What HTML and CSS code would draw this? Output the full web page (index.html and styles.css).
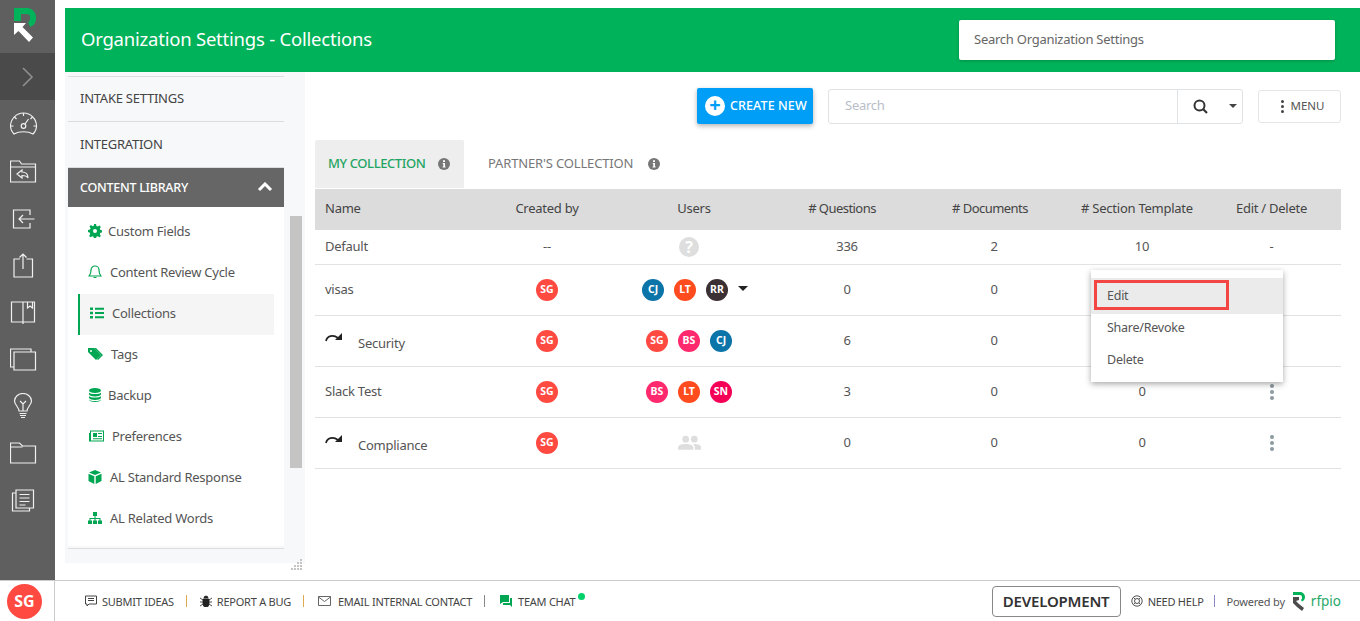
FILE: index.html
```html
<!DOCTYPE html>
<html lang="en">
<head>
    <meta charset="UTF-8">
    <title>Organization Settings - Collections</title>
    <link rel="stylesheet" href="styles.css">
</head>
<body>
    <div class="app">
        <nav class="rail">
            <div class="rail-logo">
                <svg width="30" height="36" viewBox="0 0 30 36">
                    <path d="M2 0H16a9 9 0 0 1 8 9v2a9 9 0 0 1-6 8l-2-5a3 3 0 0 0 2-3V9a3 3 0 0 0-3-3H9v7H2z" fill="#00b259"/>
                    <path d="M2 15H14L10.500 19 21 29.500 17 34 6.500 23 2 27z" fill="#fff"/>
                </svg>
            </div>
            <div class="rail-toggle">
                <svg width="14" height="22" viewBox="0 0 14 22"><path d="M2 2l9 9-9 9" fill="none" stroke="#8f8f8f" stroke-width="1.600"/></svg>
            </div>
            <div class="rail-icons">
                <svg class="rail-icon" viewBox="0 0 28 26"><path d="M4 23c-2-2-3.500-5-3.500-8a13 13 0 0 1 26 0c0 3-1.500 6-3.500 8-5-3-14-3-19 0z"/><circle cx="13.500" cy="15" r="2.300"/><path d="M15 13l3.500-5M13.500 2v3M4.500 6l2 2M.5 15h3M26.500 15h-3M22.500 6l-2 2"/></svg>
                <svg class="rail-icon" viewBox="0 0 28 26"><path d="M.5 9V3h9l2 3h14v18H.5V9h25"/><path d="M12 12l-5 4 5 4v-2.500c3 0 5 .5 6 2.500 0-4-2-6-6-6z"/></svg>
                <svg class="rail-icon" viewBox="0 0 28 26"><path d="M20 10V5H3.500v18H20v-5"/><path d="M24.500 14H9M13 10l-4 4 4 4"/></svg>
                <svg class="rail-icon" viewBox="0 0 28 26"><path d="M10 7H4v18h18.500V7H16.500M13 17V2M9.500 5.500L13 2l3.500 3.500"/></svg>
                <svg class="rail-icon" viewBox="0 0 28 26"><path d="M13 3H1.500v20H13zM13 3h11.500v20H13zM13 23v2M17.500 3v6l2.500-2 2.500 2V3"/></svg>
                <svg class="rail-icon" viewBox="0 0 28 26"><path d="M4 21H.5V3H21v3"/><path d="M4 6h21.500v18H4z"/></svg>
                <svg class="rail-icon" viewBox="0 0 28 26"><path d="M9 18c0-4-4.500-6-4.500-10a8.500 7.500 0 0 1 17 0c0 4-4.500 6-4.500 10zM9.500 20.500h7M10 22.500h6M11 24.500h4M13 18v-8M10 8l3 3 3-3"/></svg>
                <svg class="rail-icon" viewBox="0 0 28 26"><path d="M.5 23V3h9l3 3h13v17zM.5 7h12"/></svg>
                <svg class="rail-icon" viewBox="0 0 28 26"><path d="M6 3h17.500v18H6zM6 6H2.500v18h17v-3M9.500 7.500h10M9.500 11h10M9.500 14.500h10M9.500 18h6"/></svg>
            </div>
        </nav>
        <div class="page">
            <header class="page-header">
                <h1>Organization Settings - Collections</h1>
                <div class="org-search">Search Organization Settings</div>
            </header>
            <div class="page-body">
                <aside class="side">
                    <div class="side-list">
                        <div class="side-item">INTAKE SETTINGS</div>
                        <div class="side-item">INTEGRATION</div>
                        <div class="side-head"><span>CONTENT LIBRARY</span>
                            <svg width="16" height="10" viewBox="0 0 16 10"><path d="M2 8l6-6 6 6" fill="none" stroke="#fff" stroke-width="3"/></svg>
                        </div>
                        <div class="side-sub">
                            <div class="sub-item"><svg class="sub-icon" viewBox="0 0 14 14"><path d="M6 0h2l.4 2 1.400.6 1.700-1.100 1.400 1.400-1.100 1.700.6 1.400 2 .4v2l-2 .4-.6 1.400 1.100 1.700-1.400 1.400-1.700-1.100-1.400.6-.4 2H6l-.4-2-1.400-.6-1.700 1.100-1.400-1.400 1.100-1.700L1.600 8.400 0 8V6l2-.4.6-1.400L1.500 2.500l1.400-1.400 1.700 1.100L6 1.600z"/><circle cx="7" cy="7" r="2" fill="#fff"/></svg><span class="gap-1">Custom Fields</span></div>
                            <div class="sub-item"><svg class="sub-icon" viewBox="0 0 14 14"><path d="M7 1a4 4 0 0 1 4 4c0 4 1 4.500 2 6H1c1-1.500 2-2 2-6a4 4 0 0 1 4-4zM5.500 12.500h3" fill="none" stroke="#00a651" stroke-width="1.200"/></svg><span class="gap-2">Content Review Cycle</span></div>
                            <div class="sub-item is-active"><svg class="sub-icon" viewBox="0 0 14 14"><path d="M0 1.500h3v2.500H0zM0 5.800h3v2.500H0zM0 10h3v2.500H0zM5 1.800h9v2H5zM5 6h9v2H5zM5 10.300h9v2H5z"/></svg><span class="gap-2">Collections</span></div>
                            <div class="sub-item"><svg class="sub-icon wide" viewBox="0 0 16 14"><path d="M0 1h6l7 7-5 5-8-8z"/><path d="M8 1l7 7-5 5-1-1 4-4-7-7z"/><circle cx="3" cy="4" r="1" fill="#fff"/></svg><span class="gap-3">Tags</span></div>
                            <div class="sub-item"><svg class="sub-icon" viewBox="0 0 14 14"><ellipse cx="7" cy="2.500" rx="6" ry="2.500"/><path d="M1 4.500c1 2 11 2 12 0v2c-1 2.500-11 2.500-12 0zM1 8c1 2 11 2 12 0v2c-1 2.500-11 2.500-12 0zM1 11.500c1 2 11 2 12 0v.5c-1 2.500-11 2.500-12 0z"/></svg><span class="gap-1">Backup</span></div>
                            <div class="sub-item"><svg class="sub-icon wide" viewBox="0 0 16 14"><path d="M2 1.500h14v11H1V4h1v7.500h13v-9H3v9H2z"/><path d="M5 4h4v4H5zM10 4h4v1h-4zM10 7h4v1h-4zM5 9.300h9v1H5z"/></svg><span class="gap-2">Preferences</span></div>
                            <div class="sub-item"><svg class="sub-icon" viewBox="0 0 14 14"><path d="M7 0l6 2.500L7 5 1 2.500zM0.500 3.700L6.300 6.200V14L0.500 11zM13.500 3.700L7.700 6.200V14l5.800-3z"/></svg><span class="gap-2">AL Standard Response</span></div>
                            <div class="sub-item"><svg class="sub-icon" viewBox="0 0 14 14"><path d="M5 1h4v4H7.500v2h5v2.500H14V13h-4V9.500h1.500V8h-4v1.500H9V13H5V9.500h1.500V8h-4v1.500H4V13H0V9.500h1.500V7h5V5H5z"/></svg><span class="gap-2">AL Related Words</span></div>
                        </div>
                    </div>
                    <div class="side-scroll"><div class="side-thumb"></div></div>
                    <svg class="side-grip" width="12" height="12" viewBox="0 0 12 12"><path d="M9 1h2v2H9zM6 4h2v2H6zM9 4h2v2H9zM3 7h2v2H3zM6 7h2v2H6zM9 7h2v2H9zM0 10h2v2H0zM3 10h2v2H3zM6 10h2v2H6zM9 10h2v2H9z" fill="#c4c4c4"/></svg>
                </aside>
                <main class="content">
                    <div class="toolbar">
                        <button class="create-btn"><span class="plus">+</span><span class="create-label">CREATE NEW</span></button>
                        <div class="search">
                            <span class="search-input">Search</span>
                            <span class="search-btn">
                                <svg width="15" height="15" viewBox="0 0 15 15"><circle cx="6.500" cy="6.500" r="5" fill="none" stroke="#333" stroke-width="2"/><path d="M10 10l4 4" stroke="#333" stroke-width="2.200"/></svg>
                                <i class="caret"></i>
                            </span>
                        </div>
                        <button class="menu-btn"><span class="menu-dots"><i></i><i></i><i></i></span><span class="menu-label">MENU</span></button>
                    </div>
                    <div class="tabs">
                        <div class="tab is-active"><span class="tab-label">MY COLLECTION</span><svg class="info" viewBox="0 0 12 12"><circle cx="6" cy="6" r="6"/><path d="M5 2.300h2v1.800H5zM4.700 5h2.300v3.500h.6v1H4.600v-1h.7V6h-.6z" fill="#fff"/></svg></div>
                        <div class="tab"><span class="tab-label">PARTNER'S COLLECTION</span><svg class="info" viewBox="0 0 12 12"><circle cx="6" cy="6" r="6"/><path d="M5 2.300h2v1.800H5zM4.700 5h2.300v3.500h.6v1H4.600v-1h.7V6h-.6z" fill="#fff"/></svg></div>
                    </div>
                    <table class="grid">
                        <colgroup>
                            <col class="col-name"><col class="col-by"><col class="col-users"><col class="col-q"><col class="col-d"><col class="col-s"><col class="col-e">
                        </colgroup>
                        <thead>
                            <tr><th>Name</th><th>Created by</th><th>Users</th><th># Questions</th><th># Documents</th><th># Section Template</th><th>Edit / Delete</th></tr>
                        </thead>
                        <tbody>
                            <tr class="row-short">
                                <td>Default</td><td>--</td>
                                <td><span class="unknown">?</span></td>
                                <td>336</td><td>2</td><td>10</td><td>-</td>
                            </tr>
                            <tr>
                                <td>visas</td>
                                <td><span class="av red">SG</span></td>
                                <td><span class="avs shift"><span class="av blue">CJ</span><span class="av orange">LT</span><span class="av dark">RR</span><i class="caret black"></i></span></td>
                                <td>0</td><td>0</td><td></td><td></td>
                            </tr>
                            <tr>
                                <td class="is-shared"><svg class="shared" viewBox="0 0 18 10"><path d="M1 9c1-5 7-7 12-3" fill="none" stroke="#222" stroke-width="1.700"/><path d="M17 1v7h-7z" fill="#222"/></svg><span class="shared-name">Security</span></td>
                                <td><span class="av red">SG</span></td>
                                <td><span class="avs"><span class="av red">SG</span><span class="av pink">BS</span><span class="av blue">CJ</span></span></td>
                                <td>6</td><td>0</td><td></td><td></td>
                            </tr>
                            <tr>
                                <td>Slack Test</td>
                                <td><span class="av red">SG</span></td>
                                <td><span class="avs"><span class="av pink">BS</span><span class="av orange">LT</span><span class="av crimson">SN</span></span></td>
                                <td>3</td><td>0</td><td>0</td><td><span class="kebab"><i></i><i></i><i></i></span></td>
                            </tr>
                            <tr>
                                <td class="is-shared"><svg class="shared" viewBox="0 0 18 10"><path d="M1 9c1-5 7-7 12-3" fill="none" stroke="#222" stroke-width="1.700"/><path d="M17 1v7h-7z" fill="#222"/></svg><span class="shared-name">Compliance</span></td>
                                <td><span class="av red">SG</span></td>
                                <td><svg class="no-users" viewBox="0 0 24 16"><circle cx="8" cy="4" r="3.500"/><circle cx="17" cy="4" r="3.500"/><path d="M0 15v-2c0-3 4-4 8-4s8 1 8 4v2zM17.500 15v-2.500c0-1.300-.6-2.400-1.700-3.300 4-.3 8.200.8 8.200 3.300v2.500z"/></svg></td>
                                <td>0</td><td>0</td><td>0</td><td><span class="kebab"><i></i><i></i><i></i></span></td>
                            </tr>
                        </tbody>
                    </table>
                    <div class="row-menu">
                        <div class="row-menu-item is-hover"><span class="mark"></span>Edit</div>
                        <div class="row-menu-item">Share/Revoke</div>
                        <div class="row-menu-item">Delete</div>
                    </div>
                </main>
            </div>
        </div>
    </div>
    <footer class="foot">
        <div class="foot-user"><span class="foot-av">SG</span></div>
        <div class="foot-links">
            <span class="foot-link"><svg class="foot-icon" viewBox="0 0 12 12"><path d="M.5 1h11v8H4l-2 2V9H.5zM3 3.500h6M3 5.500h6" fill="none" stroke="#444"/></svg>SUBMIT IDEAS</span>
            <i class="sep amber"></i>
            <span class="foot-link"><svg class="foot-icon" viewBox="0 0 12 12"><path d="M4 3a2 2 0 0 1 4 0zM3 4h6v5a3 3 0 0 1-6 0zM0 3l3 2M12 3L9 5M0 7h3M12 7H9M0 11l3-2M12 11L9 9" fill="#222" stroke="#222" stroke-width=".8"/></svg>REPORT A BUG</span>
            <i class="sep amber"></i>
            <span class="foot-link mail"><svg class="foot-icon wide" viewBox="0 0 13 10"><path d="M.5.500h12v9H.5zM.5 1l6 4.500L12.500 1" fill="none" stroke="#555" stroke-width=".9"/></svg>EMAIL INTERNAL CONTACT</span>
            <i class="sep"></i>
            <span class="foot-link chat"><svg class="foot-icon" viewBox="0 0 12 12"><path d="M0 0h9v7H3L0 9z" fill="#00a651"/><path d="M10 3h2v9l-2-2H3V8h7z" fill="#00a651"/></svg>TEAM CHAT<i class="online"></i></span>
        </div>
        <div class="foot-right">
            <span class="env">DEVELOPMENT</span>
            <span class="foot-link help"><svg class="foot-icon" viewBox="0 0 12 12"><circle cx="6" cy="6" r="5.200" fill="none" stroke="#555"/><circle cx="6" cy="6" r="2.500" fill="none" stroke="#555"/><path d="M2.300 2.300l2 2M9.700 2.300l-2 2M2.300 9.700l2-2M9.700 9.700l-2-2" stroke="#555"/></svg>NEED HELP</span>
            <i class="sep violet"></i>
            <span class="powered">Powered by</span>
            <svg class="foot-logo" width="14" height="19" viewBox="0 0 14 19"><path d="M1 0h7a5 5 0 0 1 5 5 5 5 0 0 1-3 4.500L9 8a3 3 0 0 0 1-3 2 2 0 0 0-2-2H1z" fill="#00b259"/><path d="M1 5h6v3l-3 1 3 3 5 4-2 3-5-4-4-4z" fill="#4c4c4c"/></svg>
            <span class="rfpio">rfpio</span>
        </div>
    </footer>
</body>
</html>
```

FILE: styles.css
```css
* {
    box-sizing: border-box;
}

body {
    margin: 0;
    height: 621px;
    overflow: hidden;
    font-family: "Noto Sans", "Open Sans", sans-serif;
    font-size: 13px;
    letter-spacing: -0.25px;
    color: #444;
    background-color: #fff;
}

.app {
    display: flex;
    height: 580px;
}

/* left rail */
.rail {
    width: 55px;
    flex-shrink: 0;
    background-color: #5f5f5f;
}

.rail-logo {
    height: 53px;
    padding: 8px 0 0 12px;
}

.rail-toggle {
    height: 47px;
    background-color: #4a4a4a;
    display: flex;
    align-items: center;
    padding-left: 21px;
}

.rail-icons {
    display: flex;
    flex-direction: column;
    align-items: center;
    gap: 21px;
    padding: 11px 8px 0 0;
}

.rail-icon {
    width: 28px;
    height: 26px;
    fill: none;
    stroke: #f0f0f0;
    stroke-width: 1.200;
}

/* page */
.page {
    flex: 1;
    min-width: 0;
    padding: 8px 0 0 10px;
    display: flex;
    flex-direction: column;
}

.page-header {
    height: 64px;
    flex-shrink: 0;
    background-color: #00b259;
    display: flex;
    align-items: center;
    justify-content: space-between;
    padding: 0 25px 0 16px;
}

.page-header h1 {
    margin: 0;
    padding-bottom: 4px;
    font-size: 18.5px;
    font-weight: 400;
    letter-spacing: -0.22px;
    color: #fff;
}

.org-search {
    width: 376px;
    height: 40px;
    line-height: 38px;
    padding-left: 15px;
    background-color: #fff;
    border-radius: 2px;
    color: #666;
    box-shadow: 0 1px 3px rgba(0, 0, 0, 0.2);
}

.page-body {
    flex: 1;
    display: flex;
    min-height: 0;
}

/* side menu */
.side {
    position: relative;
    width: 240px;
    height: 491px;
    flex-shrink: 0;
    background-color: #f7f8fa;
    padding: 4px 0 0 3px;
}

.side-list {
    width: 216px;
    border-top: 1px solid #dcdde0;
    border-bottom: 1px solid #dcdde0;
}

.side-item {
    height: 45px;
    line-height: 42px;
    padding-left: 12px;
    color: #444;
    border-bottom: 1px solid #dcdde0;
}

.side-item + .side-item {
    height: 46px;
    line-height: 44px;
}

.side-head {
    height: 39px;
    padding: 0 11px 1px 12px;
    display: flex;
    align-items: center;
    justify-content: space-between;
    background-color: #666;
    color: #fff;
    font-size: 12.5px;
    font-weight: 500;
}

.side-sub {
    background-color: #fff;
    padding: 5px 10px 0;
    height: 339px;
    margin-bottom: 2px;
}

.sub-item {
    height: 41px;
    display: flex;
    align-items: center;
    padding: 0 0 4px 10px;
    color: #555;
}

.sub-item.is-active {
    background-color: #f5f5f5;
    border-left: 2px solid #00a651;
}

.sub-icon {
    width: 14px;
    height: 14px;
    fill: #00a651;
    flex-shrink: 0;
}

.sub-icon.wide {
    width: 16px;
}

.gap-1 {
    margin-left: 6px;
}

.gap-2 {
    margin-left: 8px;
}

.gap-3 {
    margin-left: 7px;
}

.side-scroll {
    position: absolute;
    left: 225px;
    top: 0;
    width: 12px;
    height: 100%;
}

.side-thumb {
    margin-top: 144px;
    height: 252px;
    background-color: #c4c4c4;
}

.side-grip {
    position: absolute;
    right: 2px;
    bottom: -7px;
}

/* content */
.content {
    position: relative;
    flex: 1;
    min-width: 0;
    padding: 0 19px 0 10px;
}

.toolbar {
    display: flex;
    align-items: center;
    justify-content: flex-end;
    height: 68px;
}

.create-btn {
    width: 116px;
    height: 36px;
    display: flex;
    align-items: center;
    gap: 5px;
    padding: 0 0 0 8px;
    border: 0;
    border-radius: 2px;
    background-color: #009ef7;
    color: #fff;
    font-family: inherit;
    font-size: 12.5px;
    font-weight: 500;
    letter-spacing: 0.1px;
    box-shadow: 0 2px 5px rgba(0, 0, 0, 0.3);
}

.create-label,
.menu-label {
    padding-bottom: 2px;
}

.plus {
    width: 20px;
    height: 20px;
    line-height: 18px;
    border-radius: 50%;
    background-color: #fff;
    color: #009ef7;
    font-size: 20px;
    font-weight: 700;
    text-align: center;
}

.search {
    width: 415px;
    height: 35px;
    margin-left: 15px;
    display: flex;
    border: 1px solid #dfe3e6;
    border-radius: 3px;
}

.search-input {
    flex: 1;
    line-height: 31px;
    padding-left: 16px;
    color: #b9bdc9;
}

.search-btn {
    width: 65px;
    display: flex;
    align-items: center;
    gap: 21px;
    padding-left: 15px;
    border-left: 1px solid #dfe3e6;
}

.caret {
    width: 0;
    height: 0;
    border-left: 4px solid transparent;
    border-right: 4px solid transparent;
    border-top: 4px solid #444;
}

.caret.black {
    margin-left: 0;
    border-left-width: 5px;
    border-right-width: 5px;
    border-top: 5px solid #222;
}

.menu-btn {
    width: 83px;
    height: 33px;
    margin-left: 15px;
    display: flex;
    align-items: center;
    justify-content: center;
    gap: 7px;
    padding: 0 0 0 6px;
    border: 1px solid #e3e5e8;
    border-radius: 3px;
    background-color: #fff;
    color: #555;
    font-family: inherit;
    font-size: 11.5px;
}

.menu-dots {
    display: flex;
    flex-direction: column;
    gap: 2px;
}

.menu-dots i {
    width: 3px;
    height: 3px;
    background-color: #444;
    border-radius: 50%;
}

.tabs {
    display: flex;
    height: 49px;
}

.tab {
    display: flex;
    align-items: center;
    gap: 15px;
    height: 48px;
    padding: 0 13px;
    color: #777;
    white-space: nowrap;
    letter-spacing: -0.15px;
}

.tab + .tab {
    padding: 0 25px 0 24px;
}

.tab-label {
    padding-bottom: 2px;
}

.tab.is-active {
    width: 149px;
    gap: 13px;
    background-color: #eee;
    border-radius: 2px 2px 0 0;
    color: #1fa463;
    font-weight: 500;
    letter-spacing: -0.4px;
}

.info {
    width: 12px;
    height: 12px;
    fill: #777;
    flex-shrink: 0;
}

/* table */
.grid {
    width: 1026px;
    table-layout: fixed;
    border-collapse: collapse;
}

.col-name { width: 159px; }
.col-by { width: 146px; }
.col-users { width: 148px; }
.col-q { width: 148px; }
.col-d { width: 156px; }
.col-s { width: 130px; }
.col-e { width: 139px; }

.grid th {
    height: 41px;
    background-color: #dcdcdc;
    font-weight: 400;
    color: #444;
    padding: 0 0 4px;
    text-align: center;
}

.grid th:first-child,
.grid td:first-child {
    text-align: left;
    padding-left: 10px;
}

.grid th:nth-child(4),
.grid th:nth-child(5) {
    letter-spacing: -0.55px;
}

.grid th:nth-child(5) {
    padding-right: 8px;
}

.grid td {
    height: 51px;
    padding: 0 0 2px;
    text-align: center;
    color: #555;
    border-bottom: 1px solid #e2e2e2;
}

.grid td:nth-child(3) {
    padding-right: 10px;
}

.grid td:nth-child(4),
.grid td:nth-child(6) {
    padding-left: 10px;
}

.grid td.is-shared {
    padding: 2px 0 0 10px;
}

.row-short td {
    height: 34px;
}

.av {
    display: inline-block;
    width: 22px;
    height: 22px;
    margin-top: 2px;
    line-height: 21px;
    border-radius: 50%;
    color: #fff;
    font-size: 10.5px;
    font-weight: 700;
    letter-spacing: 0;
    text-align: center;
    vertical-align: middle;
}

.avs {
    display: inline-flex;
    align-items: center;
    gap: 10px;
}

.avs.shift {
    position: relative;
    left: 6px;
}

.red { background-color: #ff4a42; }
.blue { background-color: #0b74a8; }
.orange { background-color: #ff4c1f; }
.dark { background-color: #3b3033; }
.pink { background-color: #ff2a6d; }
.crimson { background-color: #f50057; }

.unknown {
    display: inline-block;
    width: 20px;
    height: 20px;
    margin-top: 2px;
    line-height: 20px;
    border-radius: 50%;
    background-color: #dedede;
    color: #fff;
    font-size: 16px;
    font-weight: 700;
}

.no-users {
    width: 23px;
    height: 16px;
    fill: #dedede;
    vertical-align: middle;
}

.shared {
    width: 18px;
    height: 10px;
    vertical-align: 6px;
}

.shared-name {
    margin-left: 15px;
}

.kebab {
    display: inline-flex;
    flex-direction: column;
    gap: 2px;
    vertical-align: middle;
}

.kebab i {
    width: 4px;
    height: 4px;
    border-radius: 50%;
    background-color: #8a9aa0;
}

/* row menu */
.row-menu {
    position: absolute;
    left: 786px;
    top: 198px;
    width: 192px;
    height: 112px;
    padding-top: 8px;
    background-color: #fff;
    box-shadow: 0 2px 6px rgba(0, 0, 0, 0.35);
    font-size: 12.5px;
    z-index: 2;
}

.row-menu-item {
    position: relative;
    height: 32px;
    line-height: 28px;
    padding-left: 16px;
    color: #555;
}

.row-menu-item.is-hover {
    height: 36px;
    line-height: 36px;
    background-color: #ebebeb;
}

.mark {
    position: absolute;
    left: 3px;
    top: 2px;
    width: 135px;
    height: 30px;
    border: 3px solid #f44545;
}

/* footer */
.foot {
    height: 41px;
    display: flex;
    align-items: center;
    border-top: 1px solid #c9cbcd;
}

.foot-user {
    width: 55px;
    height: 40px;
    flex-shrink: 0;
    display: flex;
    align-items: center;
    padding-left: 7px;
    border-right: 1px solid #c9cbcd;
}

.foot-av {
    width: 35px;
    height: 35px;
    line-height: 34px;
    border-radius: 50%;
    background-color: #ff4a42;
    color: #fff;
    font-size: 16px;
    font-weight: 700;
    letter-spacing: 0;
    text-align: center;
}

.foot-links {
    display: flex;
    align-items: center;
    padding-left: 30px;
}

.foot-link {
    display: inline-flex;
    align-items: center;
    gap: 5px;
    font-size: 11px;
    color: #444;
    letter-spacing: -0.25px;
}

.foot-link.mail {
    gap: 7px;
    margin-left: 1px;
}

.foot-link.chat {
    position: relative;
    gap: 6px;
}

.foot-icon {
    width: 12px;
    height: 12px;
}

.foot-icon.wide {
    width: 13px;
    height: 10px;
}

.online {
    position: absolute;
    right: -10px;
    top: -1px;
    width: 7px;
    height: 7px;
    border-radius: 50%;
    background-color: #00d26a;
}

.sep {
    width: 1px;
    height: 12px;
    margin: 0 15px 0 12px;
    background-color: #888;
}

.sep.amber {
    margin: 0 13px 0 12px;
    background-color: #e0a94f;
}

.sep.violet {
    background-color: #8a88c4;
    margin: 0 12px 0 10px;
}

.foot-right {
    margin-left: auto;
    display: flex;
    align-items: center;
    padding-right: 19px;
}

.env {
    width: 129px;
    height: 31px;
    line-height: 28px;
    margin-right: 10px;
    border: 1px solid #888;
    border-radius: 4px;
    color: #333;
    font-size: 15px;
    font-weight: 600;
    letter-spacing: -0.2px;
    text-align: center;
}

.powered {
    font-size: 11px;
    letter-spacing: -0.2px;
    color: #555;
    margin-right: 7px;
}

.foot-logo {
    margin-right: 5px;
}

.rfpio {
    font-size: 13.5px;
    letter-spacing: 0;
    color: #28a868;
}
```
